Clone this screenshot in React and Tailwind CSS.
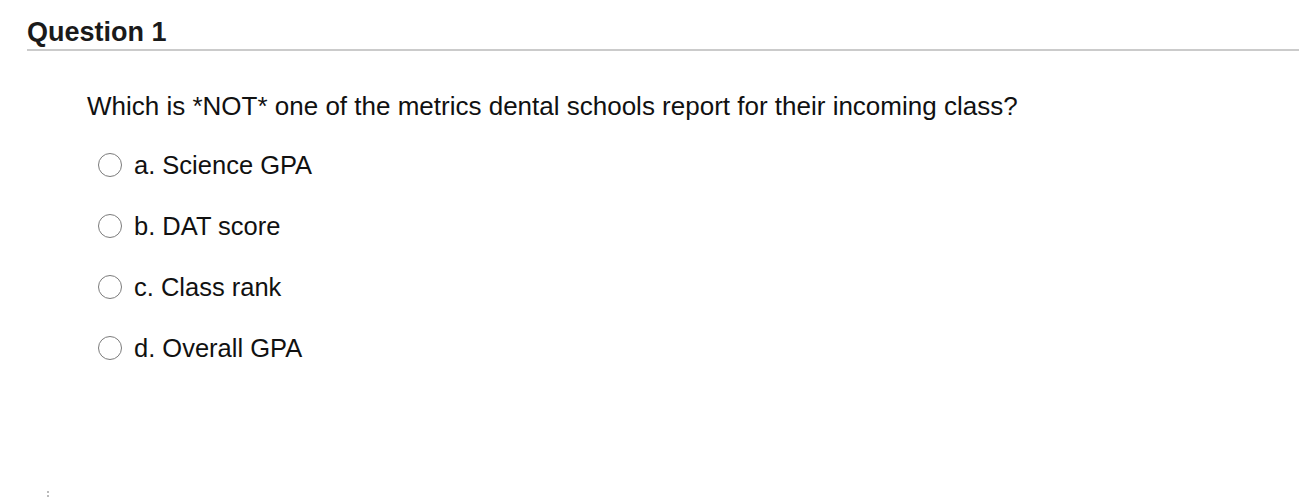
import React, { useState } from 'react';

const options = [
  { id: 'a', label: 'a. Science GPA' },
  { id: 'b', label: 'b. DAT score' },
  { id: 'c', label: 'c. Class rank' },
  { id: 'd', label: 'd. Overall GPA' },
];

const App = () => {
  const [picked, setPicked] = useState(null);

  return (
    <div className="relative min-h-[500px] bg-white text-[#111] font-['Liberation_Sans',Arial,sans-serif]">
      {/* heading */}
      <div className="pl-[27px] pt-[17px]">
        <h1 className="text-[27px] font-bold leading-[30px] text-[#1a1a1a]">Question 1</h1>
        <div className="mt-[2px] h-[2px] bg-[#cbcbcb]" />
      </div>

      {/* question */}
      <div className="pl-[87px] pt-[40px]">
        <p className="text-[26px] leading-[30px]">
          Which is *NOT* one of the metrics dental schools report for their incoming class?
        </p>
        <div className="mt-[29px] pl-[11px] flex flex-col gap-[31px]">
          {options.map((o) => (
            <label key={o.id} className="flex items-center gap-[12px] cursor-pointer h-[30px]" onClick={() => setPicked(o.id)}>
              <span className="w-[24px] h-[24px] rounded-full border-[1.5px] border-[#7b7b7b] bg-white flex items-center justify-center">
                {picked === o.id && <span className="w-[11px] h-[11px] rounded-full bg-[#333]" />}
              </span>
              <span className="text-[25.5px] leading-[30px]">{o.label}</span>
            </label>
          ))}
        </div>
      </div>

      <div className="absolute left-[47px] top-[491px] flex flex-col gap-[2px]">
        <span className="w-[2px] h-[2px] bg-[#bbb]" />
        <span className="w-[2px] h-[2px] bg-[#bbb]" />
      </div>
    </div>
  );
};

export default App;
